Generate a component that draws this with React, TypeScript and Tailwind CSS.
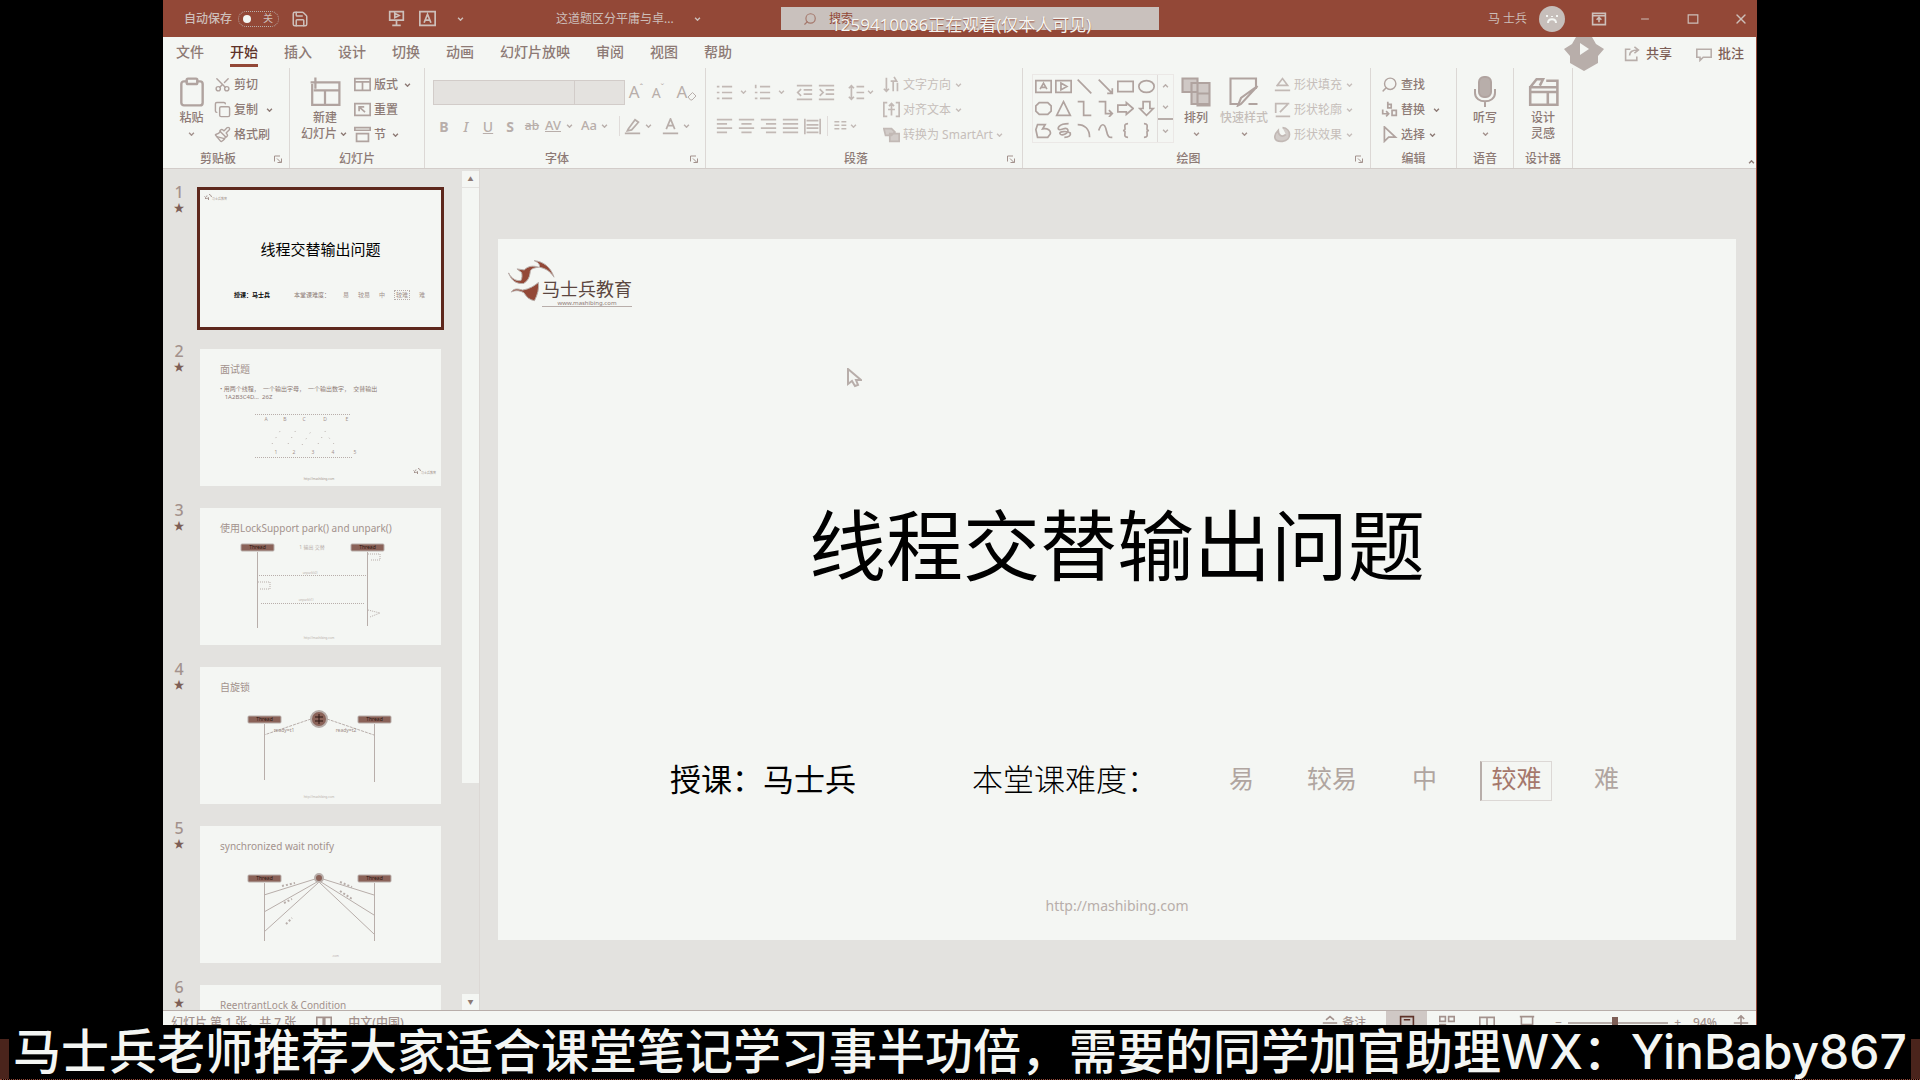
import React from "react";
import { Clipboard, Copy, Paintbrush, Scissors, Save, Search, X, Minus } from "lucide-react";

const SANS = "font-['Noto_Sans','Noto_Sans_CJK_SC',sans-serif]";

function Ico({ d, className = "size-[17px]", fill = "none", w = 2 }: { d: string; className?: string; fill?: string; w?: number }) {
  return (
    <svg viewBox="0 0 20 20" className={"shrink-0 " + className} fill={fill} stroke="currentColor" strokeWidth={w} aria-hidden="true">
      <path d={d} />
    </svg>
  );
}

function Chev({ className = "w-4" }: { className?: string }) {
  return (
    <span className={"flex shrink-0 items-center justify-center " + className}>
      <svg viewBox="0 0 8 5" className="h-1 w-[7px]" fill="none" stroke="currentColor" strokeWidth="1.8" aria-hidden="true">
        <path d="M1 1l3 3 3-3" />
      </svg>
    </span>
  );
}

function Group({ label, width, launcher, children }: { label: string; width: string; launcher?: boolean; children: React.ReactNode }) {
  return (
    <section className={"flex h-[100px] shrink-0 flex-col border-r border-[#dcd8d5] " + width} aria-label={label}>
      <div className="flex h-[82px]">{children}</div>
      <div className="flex h-[18px] items-center text-[12px] leading-4 font-medium text-[#8d7a75]">
        <span className="flex-1 text-center whitespace-nowrap">{label}</span>
        {launcher && (
          <button aria-label={label + "设置"} className="w-4 text-[#a3928d]">
            <Ico d="M3 15V4h11M8 9l8 8M17 9v8H9" className="size-[10px]" />
          </button>
        )}
      </div>
    </section>
  );
}

function Big({ icon, lines, chev, muted, className = "" }: { icon: React.ReactNode; lines: string[]; chev?: boolean; muted?: boolean; className?: string }) {
  return (
    <button className={"flex flex-col items-center pt-2 text-[12px] leading-4 font-medium " + className}>
      <span className="flex h-8 items-center text-[#b0a39f]">{icon}</span>
      <span className={"mt-0.5 flex flex-col whitespace-nowrap " + (muted ? "text-[#c6beba]" : "text-[#8d7a75]")}>
        {lines.map((l, i) => (
          <span key={l} className="flex items-center justify-center">
            {l}
            {i === 1 && chev && <Chev className="w-3" />}
          </span>
        ))}
      </span>
      {chev && lines.length === 1 && <Chev className="h-4 w-3 text-[#a3928d]" />}
    </button>
  );
}

function Small({ icon, text, chev, muted, gap = "w-4" }: { icon: React.ReactNode; text: string; chev?: boolean; muted?: boolean; gap?: string }) {
  return (
    <button className="flex h-[25px] items-center gap-[3px] text-[12px] leading-4 whitespace-nowrap">
      <span className={muted ? "text-[#c2b9b5]" : "text-[#b0a39f]"}>{icon}</span>
      <span className={muted ? "text-[#c6beba]" : "font-medium text-[#8d7a75]"}>{text}</span>
      {chev && <Chev className={(muted ? "text-[#c6beba] " : "text-[#8d7a75] ") + gap} />}
    </button>
  );
}

function IconBtn({ label, children, className = "w-[22px]" }: { label: string; children: React.ReactNode; className?: string }) {
  return (
    <button aria-label={label} className={"flex h-7 shrink-0 items-center justify-center " + className}>
      {children}
    </button>
  );
}

const shapes = [
  "M1 3h18v14H1zM6 13l4-7 4 7M7 11h6",
  "M1 3h18v14H1zM7 6l7 4-7 4z",
  "M2 2l16 16",
  "M2 2l16 16M18 12v6h-6",
  "M1 4h18v12H1z",
  "M10 3c5 0 9 3 9 7s-4 7-9 7-9-3-9-7 4-7 9-7z",
  "M5 3h10l4 4v6l-4 4H5l-4-4V7z",
  "M10 2l8 16H2z",
  "M2 2h7v16h9",
  "M2 2h8v14h8M14 12l4 4-4 4",
  "M1 6h10V3l8 7-8 7v-3H1z",
  "M6 2h8v8h4l-8 8-8-8h4z",
  "M3 3h9l-3 5c6-1 10 2 9 6l-3 4H3L1 9z",
  "M16 2C4 2 2 8 5 9s8-4 10 0-7 8-9 5 8-4 12-1c1 3-2 5-7 5",
  "M2 3c8 0 14 5 14 15",
  "M2 10c3-9 7-9 9 0s4 8 7 8",
  "M13 2c-8 0 0 8-6 8 6 0-2 8 6 8",
  "M7 2c8 0 0 8 6 8-6 0 2 8-6 8",
];

function TitleBar() {
  return (
    <header className="flex h-[37px] shrink-0 items-center bg-[#934837] text-[12px] text-[#cdbfba]">
      <div className="flex flex-1 items-center pl-[21px]">
        <label htmlFor="autosave" className="w-[54px] font-medium whitespace-nowrap">自动保存</label>
        <input id="autosave" type="checkbox" className="sr-only" />
        <label htmlFor="autosave" aria-label="自动保存开关" className="flex h-4 w-[41px] items-center gap-3 rounded-full border border-dotted border-[#b8aeaa] pl-1">
          <span className="size-2 rounded-full bg-[#f4f6f3]" />
          <span className="text-[10px]">关</span>
        </label>
        <button aria-label="保存" className="ml-3"><Save className="size-[18px]" strokeWidth={2} /></button>
        <button aria-label="从头开始" className="ml-[79px]"><Ico d="M2 2h16v10H2zM10 12v6M5 18h10M8 4v5l5-2.500z" /></button>
        <button aria-label="文本框" className="ml-[14px]"><Ico d="M1 2h18v16H1zM6 15l4-10 4 10M7 12h6" /></button>
        <button aria-label="自定义快速访问工具栏" className="ml-4"><Chev /></button>
        <span className="ml-[88px] whitespace-nowrap">这道题区分平庸与卓...</span>
        <Chev className="ml-4 w-4" />
      </div>
      <div className="relative flex h-[23px] w-[378px] shrink-0 items-center bg-[#c9c1bd] pl-[22px]">
        <Search className="size-[14px] -scale-x-100 text-[#a5786c]" />
        <input aria-label="搜索" placeholder="搜索" className="ml-3 w-60 bg-transparent text-[12px] outline-none placeholder:text-[#934837]" />
        <span className="absolute top-[6px] left-[50px] text-[17px] leading-6 whitespace-nowrap text-[#f4f6f3] [text-shadow:0_1px_1px_#934837]">1259410086正在观看(仅本人可见)</span>
      </div>
      <div className="flex flex-1 items-center justify-end">
        <span className="whitespace-nowrap">马 士兵</span>
        <span className="ml-3 flex size-[26px] items-center justify-center rounded-full bg-[#c6beba] text-[#f4f6f3]">
          <Ico d="M6 14c0-5 8-5 8 0M10 7v1M5 6v2M15 6v2" className="size-5" />
        </span>
        <button aria-label="功能区显示选项" className="ml-[26px]"><Ico d="M2 3h16v14H2zM2 6h16M10 14V9M7 11l3-3 3 3" className="size-4" /></button>
        <button aria-label="最小化" className="ml-8"><Minus className="size-3" /></button>
        <button aria-label="最大化" className="ml-9"><Ico d="M2 3h16v14H2z" className="size-3" /></button>
        <button aria-label="关闭" className="mr-[7px] ml-[34px]"><X className="size-4" /></button>
      </div>
    </header>
  );
}

function Tabs() {
  const tabs = ["文件", "开始", "插入", "设计", "切换", "动画", "幻灯片放映", "审阅", "视图", "帮助"];
  return (
    <nav className="flex h-[31px] shrink-0 items-start justify-between pr-3 pl-[13px] text-[14px] font-medium">
      <div className="flex gap-[26px]">
        {tabs.map((t) => (
          <button key={t} className={"h-[30px] border-b-[3px] pt-0.5 whitespace-nowrap " + (t === "开始" ? "border-[#934837] text-[#5e3229]" : "border-transparent text-[#8d7a75]")}>
            {t}
          </button>
        ))}
      </div>
      <div className="flex items-center text-[13px] text-[#7d5e56]">
        <svg viewBox="0 0 40 34" className="mr-5 h-[34px] w-10 self-start" aria-hidden="true">
          <path d="M12 0h16l4 7 8 5-6 7v7l-14 8-14-8v-7l-6-7 8-5z" fill="#b8aeaa" />
          <path d="M16 6l9 6-9 6z" fill="#f4f6f3" />
        </svg>
        <button className="flex h-[30px] items-center gap-[6px]">
          <Ico d="M8 4H2v14h14v-5M7 12c0-5 3-7 10-7M13 1l5 4-5 4" className="size-4 text-[#b8aeaa]" />共享
        </button>
        <button className="ml-6 flex h-[30px] items-center gap-[6px]">
          <Ico d="M1 4h18v10H9l-4 4v-4H1z" className="size-4 text-[#b8aeaa]" />批注
        </button>
      </div>
    </nav>
  );
}

function Ribbon() {
  return (
    <div className="flex h-[100px] shrink-0">
      <Group label="剪贴板" width="w-[127px]" launcher>
        <Big className="ml-[6px] w-[45px]" icon={<Clipboard className="size-8" strokeWidth={1.8} />} lines={["粘贴"]} chev />
        <div className="pt-1">
          <Small icon={<Scissors className="size-[17px] -rotate-90" />} text="剪切" />
          <Small icon={<Copy className="size-[17px]" />} text="复制" chev />
          <Small icon={<Paintbrush className="size-[17px]" />} text="格式刷" />
        </div>
      </Group>
      <Group label="幻灯片" width="w-[135px]">
        <Big className="ml-2 w-[54px]" icon={<Ico d="M2 5v13h17V4H7M4 1v7M1 4h7M3 9h16M10 9v9" className="size-8" w={1.4} />} lines={["新建", "幻灯片"]} chev />
        <div className="pt-1 pl-0.5">
          <Small icon={<Ico d="M1 3h18v14H1zM1 7h18M10 7v10" />} text="版式" chev gap="w-3" />
          <Small icon={<Ico d="M1 3h18v14H1zM6 12V7h6M6 7l7 6" />} text="重置" />
          <Small icon={<Ico d="M1 2h18v3H1zM3 9h14v9H3z" />} text="节" chev gap="w-3" />
        </div>
      </Group>
      <Group label="字体" width="w-[281px]" launcher>
        <div className="pt-[10px] pl-2 text-[#b8aeaa]">
          <div className="flex h-7 items-center">
            <select aria-label="字体" className="h-[25px] w-[142px] appearance-none border border-[#d2ccc9] bg-[#e4e2df]" />
            <select aria-label="字号" className="h-[25px] w-[50px] appearance-none border border-l-0 border-[#d2ccc9] bg-[#e4e2df]" />
            <IconBtn label="增大字号"><span className="text-[17px]">A</span><span className="mb-2 text-[9px]">ˆ</span></IconBtn>
            <IconBtn label="减小字号"><span className="text-[14px]">A</span><span className="mb-2 text-[9px]">ˇ</span></IconBtn>
            <IconBtn label="清除格式" className="ml-1 w-7"><span className="text-[17px]">A</span><Ico d="M2 12l9-9 7 7-8 8H7z" className="mt-2 size-[10px]" /></IconBtn>
          </div>
          <div className="mt-[6px] flex h-7 items-center text-[14px] font-medium">
            <IconBtn label="加粗"><b>B</b></IconBtn>
            <IconBtn label="倾斜"><i>I</i></IconBtn>
            <IconBtn label="下划线"><u>U</u></IconBtn>
            <IconBtn label="阴影"><b>S</b></IconBtn>
            <IconBtn label="删除线"><s className="text-[12px]">ab</s></IconBtn>
            <IconBtn label="字符间距" className="w-9"><span className="text-[13px] underline">AV</span><Chev className="w-4" /></IconBtn>
            <IconBtn label="更改大小写" className="w-9"><span className="text-[13px]">Aa</span><Chev className="w-4" /></IconBtn>
            <span className="ml-1 h-5 border-l border-[#e0dcda]" />
            <IconBtn label="突出显示" className="w-10"><Ico d="M1 18h18M5 13l8-11 4 3-8 9-5 1z" /><Chev /></IconBtn>
            <IconBtn label="字体颜色" className="w-9"><Ico d="M1 18h18M5 13l5-12 5 12M7 9h6" /><Chev /></IconBtn>
          </div>
        </div>
      </Group>
      <Group label="段落" width="w-[317px]" launcher>
        <div className="w-[176px] pt-[10px] pl-[7px] text-[#c2b9b5]">
          <div className="flex h-7 items-center">
            <IconBtn label="项目符号"><Ico d="M1 3h3M1 10h3M1 17h3M7 3h12M7 10h12M7 17h12" /></IconBtn>
            <Chev />
            <IconBtn label="编号"><Ico d="M2 1v4M1 10h3M1 17h3M7 3h12M7 10h12M7 17h12" /></IconBtn>
            <Chev className="mr-1 w-4" />
            <IconBtn label="减少缩进"><Ico d="M1 2h18M9 7h10M9 12h10M1 18h18M6 6l-4 4 4 4" /></IconBtn>
            <IconBtn label="增加缩进"><Ico d="M1 2h18M9 7h10M9 12h10M1 18h18M2 6l4 4-4 4" /></IconBtn>
            <IconBtn label="行距" className="ml-2 w-[34px]"><Ico d="M4 2v16M1 5l3-3 3 3M1 15l3 3 3-3M10 3h9M10 10h9M10 17h9" /><Chev className="w-3" /></IconBtn>
          </div>
          <div className="mt-[6px] flex h-7 items-center">
            <IconBtn label="左对齐"><Ico d="M1 2h18M1 7h12M1 12h18M1 17h12" /></IconBtn>
            <IconBtn label="居中"><Ico d="M1 2h18M4 7h12M1 12h18M4 17h12" /></IconBtn>
            <IconBtn label="右对齐"><Ico d="M1 2h18M7 7h12M1 12h18M7 17h12" /></IconBtn>
            <IconBtn label="两端对齐"><Ico d="M1 2h18M1 7h18M1 12h18M1 17h18" /></IconBtn>
            <IconBtn label="分散对齐"><Ico d="M1 1v18M19 1v18M3 3h14M3 8h14M3 12h14M3 17h14" /></IconBtn>
            <span className="mx-1 h-5 border-l border-[#e0dcda]" />
            <IconBtn label="分栏" className="w-7"><Ico d="M2 4h7M2 9h7M2 14h7M12 4h7M12 9h7M12 14h7" className="size-[14px]" /><Chev className="w-3" /></IconBtn>
          </div>
        </div>
        <div className="pt-1 pl-px">
          <Small muted icon={<Ico d="M4 2v16M1 15l3 3 3-3M12 18V6M9 6h7l-3-5M17 18V8" />} text="文字方向" chev gap="w-2" />
          <Small muted icon={<Ico d="M5 2H1v16h4M15 2h4v16h-4M10 3v14M7 6l3-3 3 3M6 10h8" />} text="对齐文本" chev gap="w-2" />
          <Small muted icon={<Ico d="M1 3h9l4 4-4 4H3zM8 9h11v9H8z" fill="#d2ccc9" />} text="转换为 SmartArt" chev gap="w-2" />
        </div>
      </Group>
      <Group label="绘图" width="w-[348px]" launcher>
        <div className="mt-[6px] ml-[9px] flex h-[69px] border border-[#ebe8e6]">
          <div className="grid w-[124px] grid-cols-6 place-items-center text-[#b0a39f]">
            {shapes.map((d) => (
              <Ico key={d} d={d} />
            ))}
          </div>
          <div className="flex w-4 flex-col justify-around border-l border-[#e0dcda] text-[#b8aeaa]">
            <Chev className="h-5 w-full rotate-180" />
            <Chev className="h-5 w-full" />
            <Chev className="h-6 w-full border-t-2 border-[#b8aeaa]" />
          </div>
        </div>
        <Big className="ml-1 w-9" icon={<Ico d="M7 4h12v14H7zM1 1h10v9H1zM11 11h8v8h-8z" className="size-[30px]" fill="#cfc8c5" w={1.4} />} lines={["排列"]} chev />
        <Big className="w-[60px]" muted icon={<Ico d="M18 8V1H1v17h6M19 6L8 18l-2 1 2-5zM13 18h6" className="size-[30px]" w={1.4} />} lines={["快速样式"]} chev />
        <div className="pt-1">
          <Small muted icon={<Ico d="M3 12l7-9 6 8H4M1 17h18" />} text="形状填充" chev gap="w-2" />
          <Small muted icon={<Ico d="M18 3H2v11M2 18h17M7 13l9-9" />} text="形状轮廓" chev gap="w-2" />
          <Small muted icon={<Ico d="M10 2c11 1 11 15 0 16S-1 11 5 5c0 6 4 9 9 5" fill="#d2ccc9" />} text="形状效果" chev gap="w-2" />
        </div>
      </Group>
      <Group label="编辑" width="w-[86px]">
        <div className="pt-1 pl-[10px]">
          <Small icon={<Search className="size-[17px] -scale-x-100" />} text="查找" />
          <Small icon={<Ico d="M8 1v7h4V4H8M2 10v5h7M6 12l3 3-3 3M13 11h5v6h-5z" />} text="替换" chev />
          <Small icon={<Ico d="M4 1v17l5-5h8z" />} text="选择" chev gap="w-2" />
        </div>
      </Group>
      <Group label="语音" width="w-[57px]">
        <Big
          className="w-full"
          icon={
            <svg viewBox="0 0 24 32" className="h-8 w-6" fill="none" stroke="currentColor" strokeWidth="2" aria-hidden="true">
              <rect x="6" y="1" width="12" height="20" rx="5" fill="#b8aeaa" />
              <path d="M2 13v4c0 11 20 11 20 0v-4M12 25v6" />
            </svg>
          }
          lines={["听写"]}
          chev
        />
      </Group>
      <Group label="设计器" width="w-[59px]">
        <Big className="w-full" icon={<Ico d="M2 7h17v11H2zM2 7l4-5h4l-2 4M12 3h7v4M2 10h17M13 10v8" className="size-8" w={1.6} />} lines={["设计", "灵感"]} />
      </Group>
      <button aria-label="折叠功能区" className="ml-auto flex items-end text-[#8d7a75]"><Chev className="h-3 w-2 rotate-180" /></button>
    </div>
  );
}

function Swirl({ className }: { className: string }) {
  return (
    <svg viewBox="85 118 145 128" className={className} fill="#934837" stroke="#b8aeaa" strokeWidth="3" aria-hidden="true">
      <path d="M164 122c26 2 50 18 60 50-12-18-24-26-44-30 2-10-6-16-16-20z" />
      <path d="M86 160c12 18 24 24 38 22 4-8 4-16 2-24l-14-11 22 3c12-12 26-14 44-8-18 2-26 6-26 16-2 16-8 26-20 33-20 2-38-8-44-31z" />
      <path d="M95 217c6-10 16-12 34-6 22-4 34-12 48-23 2 18-2 36-12 55-14-2-24-10-32-24-14-8-26-8-38-2z" />
    </svg>
  );
}

function MiniLogo() {
  return (
    <span className="flex items-end text-[#a3928d]">
      <svg viewBox="0 0 16 14" className="h-[7px] w-2" fill="none" stroke="#a3928d" strokeWidth="2" aria-hidden="true">
        <path d="M10 1c3 0 4 2 5 5M1 5c2 3 4 2 5-2M2 9c4 0 6 0 7-2v5" />
      </svg>
      <span className="text-[3px] leading-1">马士兵教育</span>
    </span>
  );
}

const lineColor = "#b8aeaa";

function DiagramTwo() {
  return (
    <svg viewBox="0 0 241 137" className="absolute inset-0 size-full" fill="#a3928d" fontSize="5" textAnchor="middle" aria-hidden="true">
      <path d="M55 65.500H150M55 108.500H153" stroke={lineColor} strokeDasharray="1 1" />
      {[66, 85, 104, 125, 147].map((x, i) => <text key={x} x={x} y="72">{"ABCDE"[i]}</text>)}
      {[76, 94, 113, 133, 155].map((x, i) => <text key={x} x={x} y="105">{i + 1}</text>)}
      <path d="M72 95l10-16M88 95l8-14M102 96l10-15M118 95l8-14M134 95l-8-10" stroke={lineColor} strokeWidth="1" strokeDasharray="1 6" />
      <text x="119" y="131" fontSize="3">http://mashibing.com</text>
    </svg>
  );
}

function Bar({ x, y }: { x: number; y: number }) {
  return (
    <g>
      <rect x={x} y={y} width="33" height="7" rx="1" fill="#8a6258" stroke={lineColor} />
      <text x={x + 16.5} y={y + 5} fontSize="5" fill="#2a1410" textAnchor="middle">Thread</text>
    </g>
  );
}

function DiagramThree() {
  return (
    <svg viewBox="0 0 241 137" className="absolute inset-0 size-full" fill="none" stroke={lineColor} aria-hidden="true">
      <g stroke="none"><Bar x={41} y={36} /><Bar x={151} y={36} /></g>
      <text x="112" y="41" fontSize="5" fill={lineColor} stroke="none" textAnchor="middle">1 输出 交替</text>
      <path d="M57.500 44V120M167.500 44V118" />
      <path d="M59 67.500H166M61 95.500H165" strokeDasharray="1 1" />
      <path d="M168 46h12v6h-10M58 74h12v7h-10M168 102l12 3-10 4" strokeDasharray="1 1" />
      <g fill={lineColor} stroke="none" fontSize="3" textAnchor="middle">
        <text x="110" y="66">unpark(t2)</text><text x="106" y="93">unpark(t1)</text><text x="119" y="131">http://mashibing.com</text>
      </g>
    </svg>
  );
}

function DiagramFour() {
  return (
    <svg viewBox="0 0 241 137" className="absolute inset-0 size-full" fill="none" stroke={lineColor} aria-hidden="true">
      <g stroke="none"><Bar x={48} y={49} /><Bar x={158} y={49} /></g>
      <circle cx="119" cy="52" r="8" fill="#8a6258" strokeWidth="2" />
      <path d="M119 47v10M115 50h8M115 54h8" stroke="#2a1410" />
      <path d="M111 52L64 68M127 52l47 16" strokeDasharray="3 1" />
      <path d="M64.500 57V113M174.500 57V115" />
      <g fill="#a08e88" stroke="none" fontSize="5" textAnchor="middle">
        <text x="84" y="65">ready=t1</text><text x="146" y="65">ready=t2</text>
      </g>
      <text x="119" y="131" fontSize="3" fill={lineColor} stroke="none" textAnchor="middle">http://mashibing.com</text>
    </svg>
  );
}

function DiagramFive() {
  return (
    <svg viewBox="0 0 241 137" className="absolute inset-0 size-full" fill="none" stroke={lineColor} aria-hidden="true">
      <g stroke="none"><Bar x={48} y={49} /><Bar x={158} y={49} /></g>
      <circle cx="119" cy="52" r="4" fill="#8a6258" strokeWidth="2" />
      <path d="M115 53L64 69M117 56L64 86M118 57L64 106M123 53l51 16M121 56l53 33M120 57l54 51" />
      <path d="M82 60l13-3M84 77l8-4M86 98l6-6M140 56l12 5M140 65l12 8" strokeWidth="2" strokeDasharray="2 2" />
      <path d="M64.500 57V115M174.500 57V115" />
      <text x="132" y="131" fontSize="3" fill={lineColor} stroke="none">.com</text>
    </svg>
  );
}

function Thumb({ n, title, children }: { n: number; title?: string; children?: React.ReactNode }) {
  return (
    <li className="flex h-[137px] shrink-0">
      <div className="flex w-[37px] flex-col items-center pr-[5px] text-[#a3928d]">
        <span className="-mt-[6px] text-[16px] leading-4 font-medium">{n}</span>
        <span className="text-[11px] leading-4 text-[#7d5e56]">★</span>
      </div>
      <button
        aria-label={"幻灯片 " + n}
        className={"relative w-[241px] bg-[#f4f6f3] text-left " + (n === 1 ? "outline-[3px] outline-[#5e281d]" : "")}
      >
        {title && <span className="absolute top-3 left-5 text-[10px] leading-4 whitespace-nowrap text-[#a3928d]">{title}</span>}
        {children}
      </button>
    </li>
  );
}

function ThumbPanel() {
  return (
    <aside className="flex w-[317px] shrink-0 overflow-hidden border-r border-[#dcd8d5]">
      <ol className="flex w-[299px] flex-col gap-[22px] pt-[21px]">
        <Thumb n={1}>
          <span className="absolute top-1 left-1"><MiniLogo /></span>
          <span className="flex h-full flex-col items-center text-black">
            <span className="mt-[49px] text-[15px] leading-5">线程交替输出问题</span>
            <span className="mt-[31px] flex w-full items-center pl-[34px] text-[6px] leading-2 whitespace-nowrap">
              <span className="w-[60px] font-bold">授课：马士兵</span>
              <span className="w-[49px] text-[#8d7a75]">本堂课难度：</span>
              <span className="flex items-center gap-[9px] text-[#a3928d]">
                <span>易</span><span>较易</span><span>中</span><span className="border border-dotted border-[#b8aeaa] px-px">较难</span><span>难</span>
              </span>
            </span>
          </span>
        </Thumb>
        <Thumb n={2} title="面试题">
          <span className="absolute top-9 left-5 text-[6px] leading-2 whitespace-pre text-[#8d7a75]">
            {"• 用两个线程，  一个输出字母，  一个输出数字，  交替输出\n   1A2B3C4D...  26Z"}
          </span>
          <DiagramTwo />
          <span className="absolute right-[5px] bottom-[11px]"><MiniLogo /></span>
        </Thumb>
        <Thumb n={3} title="使用LockSupport park() and unpark()"><DiagramThree /></Thumb>
        <Thumb n={4} title="自旋锁"><DiagramFour /></Thumb>
        <Thumb n={5} title="synchronized wait notify"><DiagramFive /></Thumb>
        <Thumb n={6} title="ReentrantLock & Condition" />
      </ol>
      <div className="flex flex-1 flex-col items-center text-[#8d7a75]">
        <button aria-label="向上滚动" className="mt-0.5 h-4 w-[17px] bg-[#f4f6f3] text-[6px] leading-4">▲</button>
        <div className="mt-px w-[17px] flex-[596] bg-[#f4f6f3]" />
        <div className="flex-[212]" />
        <button aria-label="向下滚动" className="h-4 w-[17px] bg-[#f4f6f3] text-[6px] leading-4">▼</button>
      </div>
    </aside>
  );
}

function Slide() {
  return (
    <article className="relative flex flex-1 flex-col bg-[#f4f6f3] text-black">
      <div className="flex h-[46px] pl-[10px] pt-5">
        <Swirl className="h-[43px] w-12 shrink-0" />
        <div className="-ml-[14px] pt-[18px]">
          <div className="text-[18px] leading-6 text-[#5b4640]">马士兵教育</div>
          <div className="w-[90px] border-b border-[#b8aeaa] text-center text-[6px] leading-[5px] text-[#8d7a75]">www.mashibing.com</div>
        </div>
      </div>
      <h1 className="mt-[207px] text-center text-[77px] leading-[108px]">线程交替输出问题</h1>
      <div className="mt-[155px] flex h-12 items-center pl-[172px] whitespace-nowrap">
        <span className="w-[302px] text-[31px]">授课：马士兵</span>
        <span className="w-[257px] text-[31px] font-light">本堂课难度：</span>
        <ul className="flex items-center text-[25px] text-[#b0a5a0]">
          <li className="w-[78px]">易</li>
          <li className="w-[105px]">较易</li>
          <li className="w-[68px]">中</li>
          <li className="mt-1 flex h-10 w-[72px] items-center justify-center border border-l-2 border-[#dcd8d5] border-l-[#b8aeaa] pb-1 text-[#a5786c]">较难</li>
          <li className="ml-[42px]">难</li>
        </ul>
      </div>
      <a href="http://mashibing.com" className="mx-auto mt-[91px] text-[14px] leading-6 text-[#b8aeaa]">http://mashibing.com</a>
      <svg viewBox="0 0 16 20" className="absolute top-[129px] left-[348px] h-5 w-4" fill="#f4f6f3" stroke="#b8aeaa" strokeWidth="2" aria-hidden="true">
        <path d="M2 1v15l4-3 3 5 3-1-2-5h5z" />
      </svg>
    </article>
  );
}

function StatusBar() {
  return (
    <footer className="flex h-[15px] shrink-0 items-start overflow-hidden border-t border-[#b8aeaa] pt-1 text-[12px] leading-4 font-medium whitespace-nowrap text-[#a3928d]">
      <span className="ml-2">幻灯片 第 1 张，共 7 张</span>
      <Ico d="M1 3h8v14H1zM11 3h8v14h-8z" className="ml-5 size-4" />
      <span className="ml-4">中文(中国)</span>
      <div className="mr-[7px] ml-auto flex items-start">
        <button className="flex gap-1"><Ico d="M1 10h18M5 6l5-4 5 4M1 14h18" className="size-4" />备注</button>
        <button aria-label="普通视图" className="-mt-1 ml-5 flex h-5 w-[41px] justify-center bg-[#cfc8c5] pt-1 text-[#5e3229]"><Ico d="M2 2h16v15H2zM6 6h8" className="size-4" /></button>
        <button aria-label="幻灯片浏览" className="ml-3"><Ico d="M1 2h7v6H1zM12 2h7v6h-7zM1 12h7v6H1z" className="size-4" /></button>
        <button aria-label="阅读视图" className="ml-6"><Ico d="M1 3h18v14H1zM10 3v14" className="size-4" /></button>
        <button aria-label="幻灯片放映" className="ml-6"><Ico d="M1 2h18M3 2v10h14V2M10 12v6" className="size-4" /></button>
        <span className="ml-5">−</span>
        <input
          aria-label="缩放"
          type="range"
          defaultValue={47}
          className="mx-[6px] mt-[7px] h-0.5 w-[100px] appearance-none bg-[#b8aeaa] [&::-webkit-slider-thumb]:h-3 [&::-webkit-slider-thumb]:w-[6px] [&::-webkit-slider-thumb]:appearance-none [&::-webkit-slider-thumb]:bg-[#7d5e56]"
        />
        <span>+</span>
        <span className="ml-3">94%</span>
        <button aria-label="适应窗口" className="ml-4"><Ico d="M10 1v18M1 10h18M6 5l4-4 4 4" className="size-4" /></button>
      </div>
    </footer>
  );
}

export default function App() {
  return (
    <div className={"flex h-screen flex-col overflow-hidden bg-black " + SANS}>
      <div className="mx-[163px] flex min-h-0 flex-1 flex-col overflow-hidden border-r border-[#934837] bg-[#f4f6f3]">
        <TitleBar />
        <Tabs />
        <Ribbon />
        <main className="flex min-h-0 flex-1 overflow-hidden border-t border-[#d2ccc9] bg-[#e3e2df]">
          <ThumbPanel />
          <section className="flex flex-1 pt-[70px] pr-5 pb-[70px] pl-[18px]" aria-label="幻灯片编辑区">
            <Slide />
          </section>
        </main>
        <StatusBar />
      </div>
      <div className="flex h-[55px] shrink-0 items-center border-b border-dotted border-[#934837]">
        <span className="mt-auto h-10 w-[9px] shrink-0 bg-[#4a241c]" />
        <p className="flex-1 text-center font-['Inter','Noto_Sans_CJK_SC',sans-serif] text-[48px] leading-[54px] font-medium whitespace-nowrap text-[#f4f6f3]">
          马士兵老师推荐大家适合课堂笔记学习事半功倍，需要的同学加官助理WX：YinBaby867
        </p>
        <span className="mt-auto h-10 w-[9px] shrink-0 bg-[#4a241c]" />
      </div>
    </div>
  );
}
